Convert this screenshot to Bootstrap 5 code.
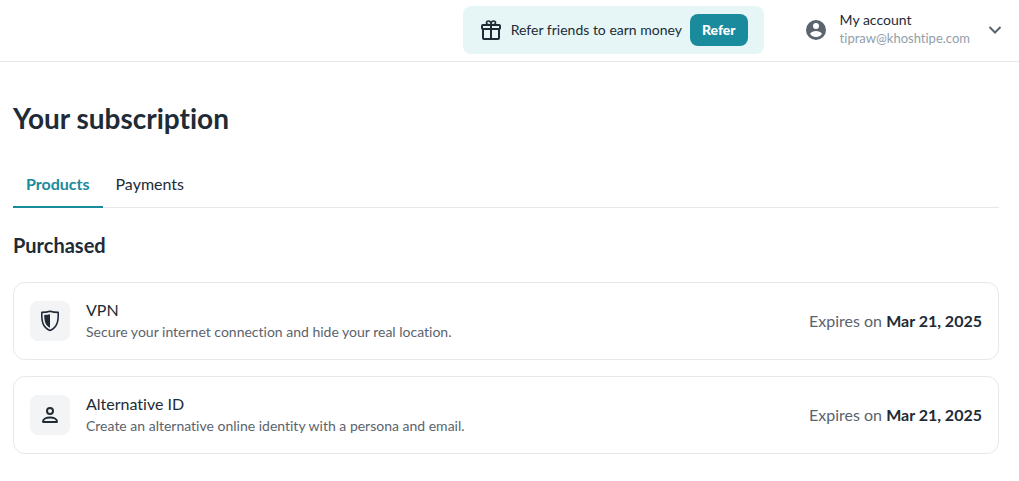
<!DOCTYPE html>
<html lang="en">
<head>
<meta charset="utf-8">
<meta name="viewport" content="width=device-width, initial-scale=1">
<title>Your subscription</title>
<link href="https://cdn.jsdelivr.net/npm/bootstrap@5.3.0/dist/css/bootstrap.min.css" rel="stylesheet">
<style>
  :root { --ink: #212b36; --teal: #1a8a9d; --line: #e6e8ea; --slate: #5b636d; }
  body { font-family: Lato, "Open Sans", sans-serif; font-size: 16px; line-height: 24px; color: var(--ink); }
  body, button { font-variant-ligatures: none; }
  .topbar { padding: 6px 15px 7px; border-bottom: 1px solid var(--line); }
  .promo { height: 48px; padding: 0 16px; background: #e6f6f7; border-radius: 8px; font-size: 14px; }
  .promo-btn { height: 32px; padding: 0 12px; border: 0; border-radius: 8px; font-size: 14px; font-weight: 900; line-height: 20px; color: #fff; background: var(--teal); }
  .promo-btn:hover { color: #fff; background: #15788a; }
  .account { margin-left: 40px; line-height: 18px; color: var(--ink); }
  .account-text { margin: 0 16px 2px 12px; }
  .account-name { font-size: 14px; }
  .account-mail { font-size: 13px; color: #919eab; }
  .content { padding: 40px 20px 24px 13px; }
  .page-title { margin-bottom: 28px; font-size: 28px; line-height: 32px; font-weight: 700; }
  .section-title { font-size: 20px; line-height: 26px; font-weight: 700; }
  .tabs { border-bottom: 1px solid var(--line); }
  .tabs .nav-link { padding: 10px 13px; margin-bottom: -1px; color: var(--ink); border-bottom: 2px solid transparent; }
  .tabs .nav-link.active { color: var(--teal); font-weight: 700; border-color: var(--teal); }
  .product { min-height: 78px; padding: 15px 16px; border: 1px solid var(--line); border-radius: 12px; }
  .tile { width: 40px; height: 40px; border-radius: 8px; background: #f3f4f6; }
  .product-text { padding-bottom: 2px; }
  .product-note { font-size: 14px; line-height: 20px; color: var(--slate); }
  .expiry { color: var(--slate); }
  .expiry strong { color: var(--ink); font-weight: 700; }
</style>
</head>
<body>
<header class="topbar d-flex justify-content-end align-items-center">
  <div class="promo d-flex align-items-center">
    <svg class="me-2" width="24" height="24" viewBox="0 0 24 24" fill="none" stroke="#212b36" stroke-width="2" stroke-linejoin="round" aria-hidden="true">
      <rect x="3" y="7" width="18" height="4" rx="1"/><path d="M4 11v9a1 1 0 0 0 1 1h14a1 1 0 0 0 1-1v-9M12 7v14"/><path d="M12 7C8.500 7 7.500 6 7.500 4.700S8.500 3 9.500 3C11 3 12 4.500 12 7zM12 7c3.500 0 4.500-1 4.500-2.300S15.500 3 14.500 3C13 3 12 4.500 12 7z" stroke-width="1.700"/>
    </svg>
    <span class="me-2">Refer friends to earn money</span>
    <button type="button" class="btn promo-btn">Refer</button>
  </div>
  <button type="button" class="account btn border-0 p-0 d-flex align-items-center text-start" aria-haspopup="true" aria-expanded="false">
    <svg width="24" height="24" viewBox="0 0 24 24" aria-hidden="true"><circle cx="12" cy="12" r="10" fill="#5b636d"/><circle cx="12" cy="8" r="3" fill="#fff"/><path d="M6 15.800C7.200 14 9.700 13 12 13s4.800 1 6 2.800A7.300 7.300 0 0 1 12 19a7.300 7.300 0 0 1-6-3.200z" fill="#fff"/></svg>
    <span class="account-text"><span class="account-name d-block">My account</span><span class="account-mail d-block">tipraw@khoshtipe.com</span></span>
    <svg width="18" height="18" viewBox="0 0 18 18" fill="none" stroke="#5b636d" stroke-width="2" aria-hidden="true"><path d="M3.500 6 9 11.500 14.500 6"/></svg>
  </button>
</header>
<main class="content">
  <h1 class="page-title">Your subscription</h1>
  <nav class="tabs nav mb-4" aria-label="Subscription">
    <a class="nav-link active" aria-current="page" href="#products">Products</a>
    <a class="nav-link" href="#payments">Payments</a>
  </nav>
  <section id="products">
    <h2 class="section-title">Purchased</h2>
    <div class="d-grid gap-3 mt-4">
      <article class="product d-flex align-items-center">
        <div class="tile d-flex align-items-center justify-content-center flex-shrink-0 me-3">
          <svg width="24" height="24" viewBox="0 0 24 24" aria-hidden="true"><path d="M12 2.200c2.700.9 5.300 1.200 8.200 1.200.2 7.800-.4 15.100-8.200 18C4.200 18.500 3.600 11.200 3.800 3.400 6.700 3.400 9.300 3.100 12 2.200z" fill="none" stroke="#212b36" stroke-width="1.600" stroke-linejoin="round"/><path d="M12 5.200v13.600C7 16.500 6.200 11.500 6.200 6c2-.1 3.900-.3 5.800-.8z" fill="#212b36"/></svg>
        </div>
        <div class="product-text flex-grow-1"><div>VPN</div><div class="product-note">Secure your internet connection and hide your real location.</div></div>
        <div class="expiry text-nowrap ms-3">Expires on <strong>Mar 21, 2025</strong></div>
      </article>
      <article class="product d-flex align-items-center">
        <div class="tile d-flex align-items-center justify-content-center flex-shrink-0 me-3">
          <svg width="24" height="24" viewBox="0 0 24 24" fill="none" stroke="#212b36" stroke-width="2" stroke-linejoin="round" aria-hidden="true"><circle cx="12" cy="8" r="3"/><path d="M5 18.500c0-2.500 3.200-4 7-4s7 1.500 7 4c0 .3-.2.500-.5.500h-13c-.3 0-.5-.2-.5-.5z"/></svg>
        </div>
        <div class="product-text flex-grow-1"><div>Alternative ID</div><div class="product-note">Create an alternative online identity with a persona and email.</div></div>
        <div class="expiry text-nowrap ms-3">Expires on <strong>Mar 21, 2025</strong></div>
      </article>
    </div>
  </section>
</main>
<script src="https://cdn.jsdelivr.net/npm/bootstrap@5.3.0/dist/js/bootstrap.bundle.min.js"></script>
</body>
</html>
